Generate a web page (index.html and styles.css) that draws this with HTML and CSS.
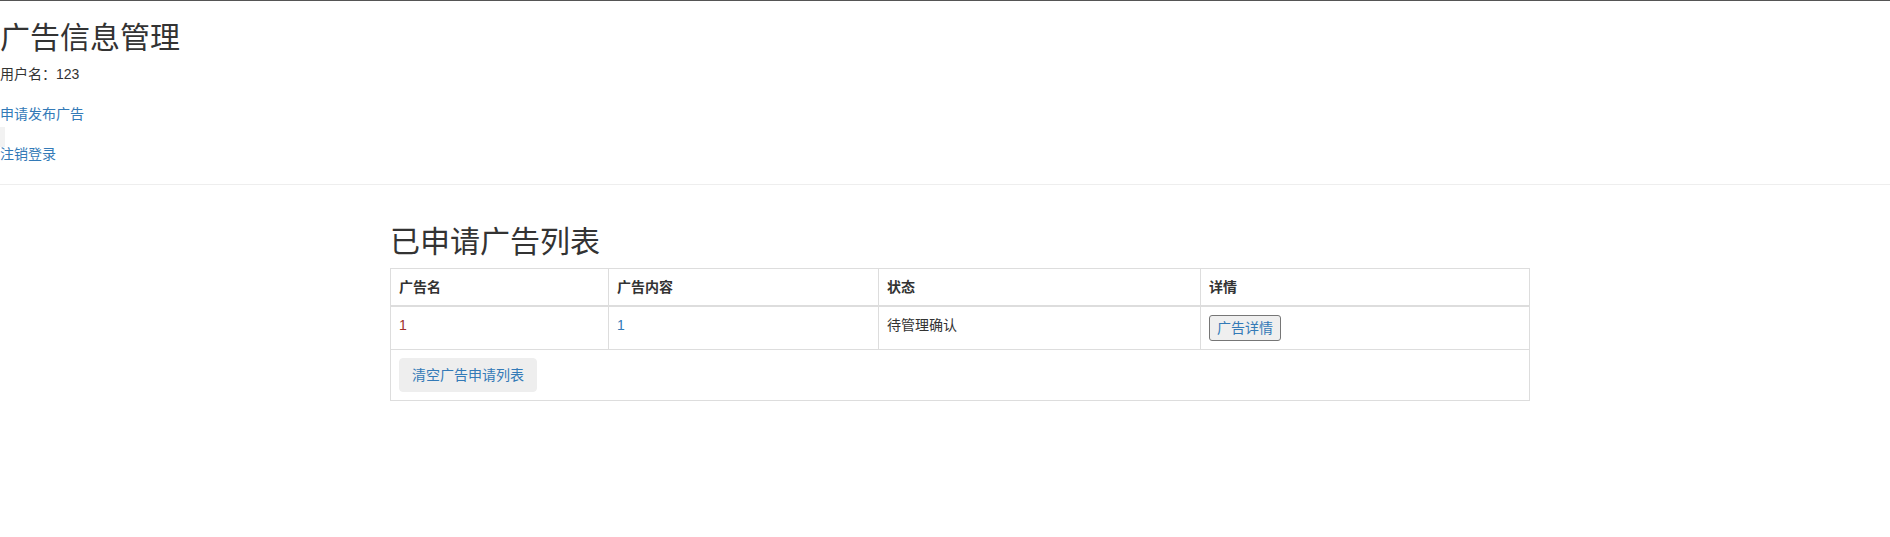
FILE: index.html
```html
<!DOCTYPE html>
<html lang="zh-CN">
<head>
<meta charset="utf-8">
<title>广告信息管理</title>
<link rel="stylesheet" href="styles.css">
</head>
<body>
<header class="top">
  <h2 class="page-title">广告信息管理</h2>
  <p class="line">用户名：123</p>
  <a class="line link" href="#">申请发布广告</a>
  <span class="ghost"></span>
  <a class="line link" href="#">注销登录</a>
</header>
<hr class="divider">
<main class="container">
  <h2 class="section-title">已申请广告列表</h2>
  <table class="table">
    <thead>
      <tr>
        <th class="c1">广告名</th>
        <th class="c2">广告内容</th>
        <th class="c3">状态</th>
        <th class="c4">详情</th>
      </tr>
    </thead>
    <tbody>
      <tr>
        <td class="name">1</td>
        <td><a class="link" href="#">1</a></td>
        <td>待管理确认</td>
        <td><button class="detail-btn" type="button">广告详情</button></td>
      </tr>
      <tr>
        <td colspan="4"><button class="clear-btn" type="button">清空广告申请列表</button></td>
      </tr>
    </tbody>
  </table>
</main>
</body>
</html>
```

FILE: styles.css
```css
html, body {
  margin: 0;
  padding: 0;
}
body {
  border-top: 1px solid #555;
  font-family: "Liberation Sans", "Noto Sans CJK SC", sans-serif;
  font-size: 14px;
  line-height: 20px;
  color: #333;
  background: #fff;
}
.top {
  display: flex;
  flex-direction: column;
  align-items: flex-start;
}
.page-title,
.section-title {
  font-size: 30px;
  font-weight: 400;
  line-height: 33px;
  margin: 20px 0 10px;
  color: #333;
}
.line {
  display: block;
  margin: 0 0 20px;
  line-height: 20px;
}
.link {
  color: #337ab7;
  text-decoration: none;
}
.ghost {
  display: block;
  width: 5px;
  height: 20px;
  background: #f2f2f2;
  margin: -17px 0 -3px;
}
.top .line:last-child {
  margin-bottom: 0;
}
.divider {
  margin: 20px 0;
  border: 0;
  border-top: 1px solid #eee;
  height: 0;
}
.container {
  display: flow-root;
  width: 1140px;
  margin: 0 auto;
  padding: 0 0 0 30px;
}
.table {
  width: 1140px;
  border-collapse: collapse;
  border-spacing: 0;
}
.table th,
.table td {
  border: 1px solid #ddd;
  padding: 8px;
  line-height: 20px;
  text-align: left;
  vertical-align: top;
}
.table th {
  font-weight: 700;
  border-bottom-width: 2px;
}
.c1 { width: 201px; }
.c2 { width: 253px; }
.c3 { width: 305px; }
.name {
  color: #a0302a;
}
.detail-btn {
  font-family: "Liberation Sans", "Noto Sans CJK SC", sans-serif;
  font-size: 14px;
  line-height: 20px;
  padding: 2px 7px;
  margin: 0;
  border: 1px solid #767676;
  border-radius: 3px;
  background: #efefef;
  color: #337ab7;
}
.clear-btn {
  font-family: "Liberation Sans", "Noto Sans CJK SC", sans-serif;
  font-size: 14px;
  line-height: 20px;
  padding: 6px 12px;
  margin: 0;
  border: 1px solid #eee;
  border-radius: 4px;
  background: #eee;
  color: #337ab7;
}
```
